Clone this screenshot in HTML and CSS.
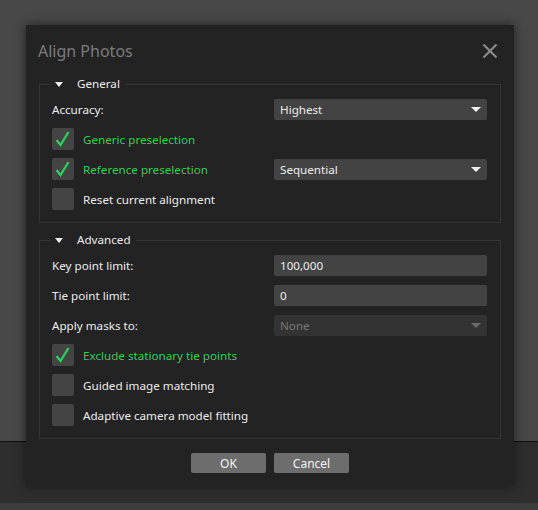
FILE: index.html
```html
<!DOCTYPE html>
<html lang="en">

<head>
    <meta charset="UTF-8">
    <meta name="viewport" content="width=device-width, initial-scale=1.0">
    <title>Align Photos</title>
    <link rel="stylesheet" href="styles.css">
</head>

<body>
    <!-- The application behind the dialog -->
    <div class="desk">
        <div class="desk-top"></div>
        <div class="desk-bar"></div>
        <div class="desk-bottom"></div>
    </div>

    <!-- The dialog window -->
    <div class="dialog">
        <div class="dialog-head">
            <span class="dialog-title">Align Photos</span>
            <svg class="close-icon" width="16" height="16" viewBox="0 0 16 16">
                <path d="M1.5 1.5 L14.5 14.5 M14.5 1.5 L1.5 14.5" stroke="#8a8a8a" stroke-width="2.2" fill="none" />
            </svg>
        </div>

        <div class="group group-general">
            <div class="legend"><span class="tri"></span>General</div>

            <div class="row">
                <span class="label">Accuracy:</span>
                <div class="select">Highest<span class="arrow"></span></div>
            </div>
            <div class="row">
                <label class="check on"><span class="box">
                    <svg width="22" height="22" viewBox="0 0 22 22"><path d="M4.5 12 L8.5 17 L16.5 4" stroke="#2bd15a" stroke-width="2.3" fill="none" /></svg>
                </span>Generic preselection</label>
            </div>
            <div class="row">
                <label class="check on"><span class="box">
                    <svg width="22" height="22" viewBox="0 0 22 22"><path d="M4.5 12 L8.5 17 L16.5 4" stroke="#2bd15a" stroke-width="2.3" fill="none" /></svg>
                </span>Reference preselection</label>
                <div class="select">Sequential<span class="arrow"></span></div>
            </div>
            <div class="row">
                <label class="check"><span class="box"></span>Reset current alignment</label>
            </div>
        </div>

        <div class="group group-advanced">
            <div class="legend"><span class="tri"></span>Advanced</div>

            <div class="row">
                <span class="label">Key point limit:</span>
                <div class="field">100,000</div>
            </div>
            <div class="row">
                <span class="label">Tie point limit:</span>
                <div class="field">0</div>
            </div>
            <div class="row">
                <span class="label">Apply masks to:</span>
                <div class="select disabled">None<span class="arrow"></span></div>
            </div>
            <div class="row">
                <label class="check on"><span class="box">
                    <svg width="22" height="22" viewBox="0 0 22 22"><path d="M4.5 12 L8.5 17 L16.5 4" stroke="#2bd15a" stroke-width="2.3" fill="none" /></svg>
                </span>Exclude stationary tie points</label>
            </div>
            <div class="row">
                <label class="check"><span class="box"></span>Guided image matching</label>
            </div>
            <div class="row">
                <label class="check"><span class="box"></span>Adaptive camera model fitting</label>
            </div>
        </div>

        <div class="buttons">
            <button class="btn">OK</button>
            <button class="btn">Cancel</button>
        </div>
    </div>
</body>

</html>
```

FILE: styles.css
```css
body {
    margin: 0;
    font-family: "Noto Sans", "Open Sans", sans-serif;
    font-size: 11.65px;
    background-color: #3c3c3c;
    height: 510px;
    overflow: hidden;
}

/* Application behind the dialog */
.desk {
    display: flex;
    flex-direction: column;
}

.desk-top {
    height: 441px;
    background-color: #484848;
}

.desk-bar {
    height: 61px;
    border-top: 1px solid #0e0e0e;
    background-color: #2e2e2e;
}

.desk-bottom {
    height: 8px;
    background-color: #3c3c3c;
}

/* Dialog window */
.dialog {
    position: absolute;
    left: 26px;
    top: 25px;
    width: 488px;
    height: 461px;
    box-sizing: border-box;
    background-color: #232323;
    box-shadow: 0 0 10px rgba(0, 0, 0, 0.55);
    padding: 0 13px 0 13px;
    display: flex;
    flex-direction: column;
}

.dialog-head {
    height: 59px;
    display: flex;
    align-items: flex-start;
    justify-content: space-between;
}

.dialog-title {
    margin-top: 15px;
    margin-left: -1px;
    font-size: 16px;
    color: #7b7b7b;
}

.close-icon {
    margin-top: 18px;
    margin-right: 3px;
}

/* Group boxes */
.group {
    position: relative;
    border: 1px solid #343434;
    padding: 13px 13px 12px 12px;
    display: flex;
    flex-direction: column;
    gap: 8px;
}

.group-advanced {
    margin-top: 17px;
    padding-top: 13px;
    padding-bottom: 12px;
}

.legend {
    position: absolute;
    top: -10px;
    left: 11px;
    padding: 0 5px 0 4px;
    background-color: #232323;
    color: #ececec;
    display: flex;
    align-items: center;
    line-height: 18px;
}

.tri {
    width: 0;
    height: 0;
    border-left: 4px solid transparent;
    border-right: 4px solid transparent;
    border-top: 5px solid #f0f0f0;
    margin: 1px 14px 0 0;
}

/* Rows of controls */
.row {
    height: 22px;
    display: flex;
    align-items: center;
}

.label {
    width: 222px;
    color: #ececec;
}

.check {
    width: 222px;
    display: flex;
    align-items: center;
    color: #ececec;
    white-space: nowrap;
}

.check.on {
    color: #3fc75c;
}

.box {
    width: 22px;
    height: 22px;
    flex-shrink: 0;
    margin-right: 9px;
    border-radius: 2px;
    background-color: #444444;
    display: flex;
}

.select,
.field {
    width: 213px;
    height: 21px;
    box-sizing: border-box;
    padding-left: 6px;
    border-radius: 2px;
    background-color: #434343;
    color: #ececec;
    display: flex;
    align-items: center;
    justify-content: space-between;
}

.select.disabled {
    background-color: #333333;
    color: #777777;
}

.arrow {
    width: 0;
    height: 0;
    margin-right: 6px;
    border-left: 5px solid transparent;
    border-right: 5px solid transparent;
    border-top: 5px solid #f0f0f0;
}

.select.disabled .arrow {
    border-top-color: #6a6a6a;
}

/* Bottom buttons */
.buttons {
    margin-top: 14px;
    display: flex;
    justify-content: center;
    gap: 8px;
}

.btn {
    width: 75px;
    height: 20px;
    padding: 0;
    border: none;
    border-radius: 2px;
    background-color: #6d6d6d;
    color: #f2f2f2;
    font-family: inherit;
    font-size: 12px;
}
```
